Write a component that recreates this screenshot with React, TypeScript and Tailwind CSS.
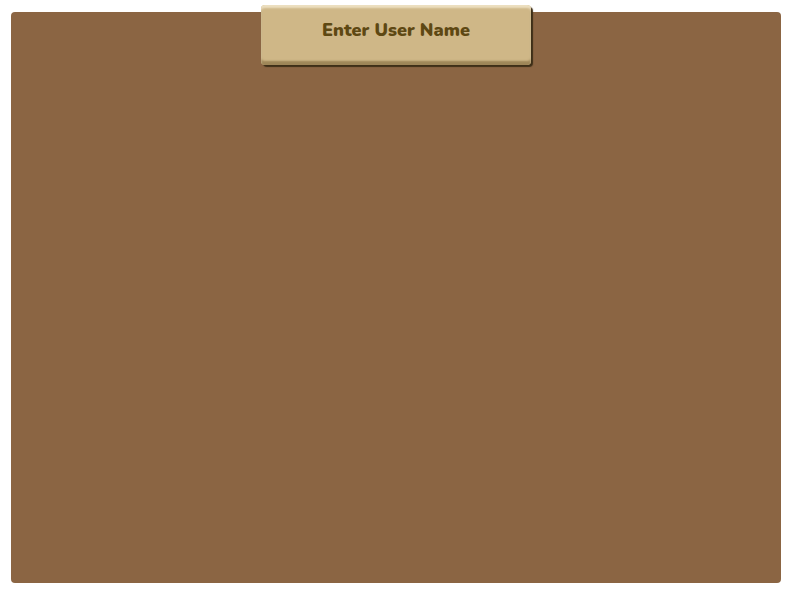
export default function App() {
  return (
    <div className="w-[800px] h-[600px] bg-white pt-[12px] pl-[11px]">
      <div className="w-[770px] h-[571px] rounded-[4px] bg-[#8b6543]">
        <div className="flex justify-center -translate-y-[7px]">
          <button className="w-[270px] h-[60px] pb-[10px] rounded-[4px] bg-[#cfb787] text-[#5e4813] text-[18px] font-black font-['Nunito','Lato','Noto_Sans',sans-serif] shadow-[inset_0_3px_2px_#ecdfc0,inset_0_-4px_2px_#9e8658,2px_2px_1px_#3e2f18]">
            Enter User Name
          </button>
        </div>
      </div>
    </div>
  );
}
